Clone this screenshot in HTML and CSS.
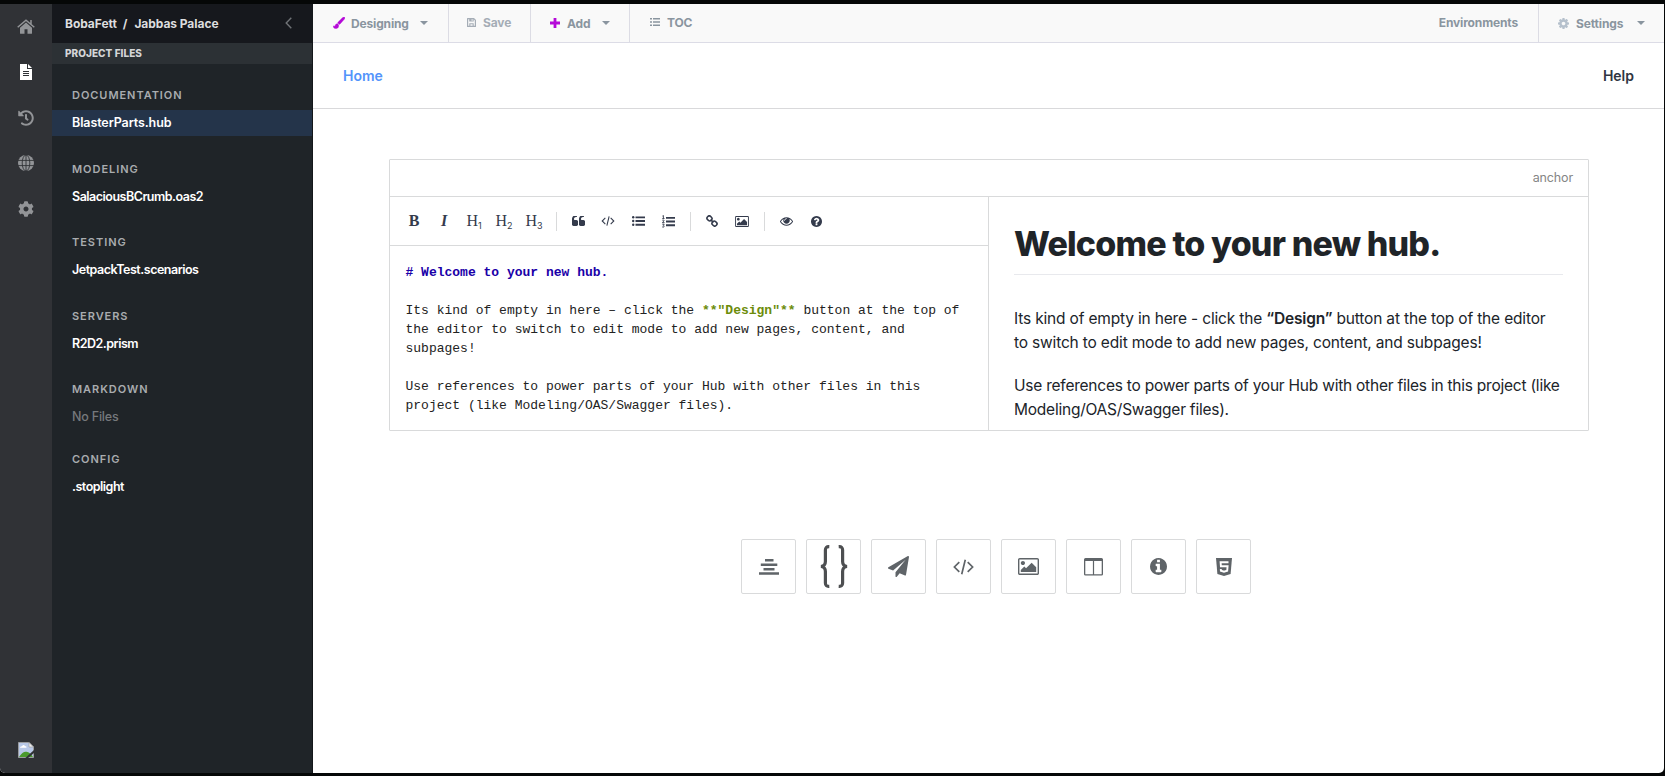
FILE: index.html
```html
<!DOCTYPE html>
<html lang="en">
<head>
<meta charset="utf-8">
<title>Jabbas Palace</title>
<link rel="stylesheet" href="styles.css">
</head>
<body>
<svg class="sprite" aria-hidden="true">
  <symbol id="home" viewBox="0 0 18 15"><path d="M9 3.6 3 8.700V14.200q0 .6.6.6H7.500V10.200H10.500V14.800H14.400q.6 0 .6-.6V8.700z"/><path d="M.7 8.200 9 1.200 17.300 8.200M14 1v4" fill="none" stroke="currentColor" stroke-width="1.500"/></symbol>
  <symbol id="file" viewBox="0 0 12 16"><path d="M0 0H7V5H12V16H0z"/><path d="M8 0 12 4H8z"/><path d="M3 7.500H9M3 9.500H9M3 11.500H9" stroke="#303236" stroke-width="1"/></symbol>
  <symbol id="history" viewBox="0 0 512 512"><path d="M504 255.531c.253 136.640-111.180 248.372-247.820 248.468-59.015.042-113.223-20.530-155.822-54.911-11.077-8.940-11.905-25.541-1.839-35.607l11.267-11.267c8.609-8.609 22.353-9.551 31.891-1.984C173.062 425.135 212.781 440 256 440c101.705 0 184-82.311 184-184 0-101.705-82.311-184-184-184-48.814 0-93.149 18.969-126.068 49.932l50.754 50.754c10.080 10.080 2.941 27.314-11.313 27.314H24c-8.837 0-16-7.163-16-16V38.627c0-14.254 17.234-21.393 27.314-11.314l49.372 49.372C129.209 34.136 189.552 8 256 8c136.810 0 247.747 110.780 248 247.531zm-180.912 78.784l9.823-12.630c8.138-10.463 6.253-25.542-4.210-33.679L288 256.349V152c0-13.255-10.745-24-24-24h-16c-13.255 0-24 10.745-24 24v135.651l65.409 50.874c10.463 8.137 25.541 6.253 33.679-4.210z"/></symbol>
  <symbol id="globe" viewBox="0 0 16 16"><circle cx="8" cy="8" r="8"/><path d="M0 5.400H16M0 10.600H16M8 0V16" stroke="#303236" stroke-width=".9"/><ellipse cx="8" cy="8" rx="3.800" ry="8" fill="none" stroke="#303236" stroke-width=".9"/></symbol>
  <symbol id="cog" viewBox="0 0 512 512"><path d="M487.4 315.7l-42.600-24.600c4.300-23.200 4.300-47 0-70.200l42.600-24.600c4.900-2.800 7.100-8.600 5.500-14-11.100-35.600-30-67.800-54.700-94.600-3.800-4.100-10-5.100-14.800-2.300L380.800 110c-17.900-15.400-38.500-27.300-60.800-35.100V25.800c0-5.600-3.900-10.500-9.400-11.700-36.700-8.200-74.300-7.800-109.200 0-5.500 1.200-9.400 6.100-9.400 11.700V75c-22.200 7.900-42.800 19.800-60.800 35.100L88.700 85.500c-4.900-2.800-11-1.900-14.800 2.300-24.700 26.700-43.600 58.900-54.700 94.600-1.700 5.400.6 11.200 5.500 14L67.300 221c-4.300 23.200-4.300 47 0 70.200l-42.600 24.600c-4.900 2.800-7.100 8.600-5.500 14 11.100 35.600 30 67.800 54.700 94.600 3.800 4.100 10 5.100 14.800 2.300l42.600-24.600c17.900 15.400 38.500 27.300 60.800 35.100v49.200c0 5.600 3.900 10.500 9.400 11.700 36.700 8.200 74.300 7.800 109.200 0 5.500-1.200 9.400-6.100 9.400-11.700v-49.200c22.200-7.900 42.800-19.800 60.800-35.100l42.600 24.600c4.900 2.800 11 1.900 14.800-2.300 24.700-26.700 43.600-58.900 54.700-94.600 1.500-5.500-.7-11.300-5.600-14.100zM256 336c-44.100 0-80-35.900-80-80s35.900-80 80-80 80 35.900 80 80-35.900 80-80 80z"/></symbol>
  <symbol id="gear" viewBox="128 128 1536 1536"><path d="M1152 896q0-106-75-181t-181-75-181 75-75 181 75 181 181 75 181-75 75-181zm512-109v222q0 12-8 23t-20 13l-185 28q-19 54-39 91 35 50 107 138 10 12 10 25t-9 23q-27 37-99 108t-94 71q-12 0-26-9l-138-108q-44 23-91 38-16 136-29 186-7 28-36 28h-222q-14 0-24.500-8.500t-11.500-21.500l-28-184q-49-16-90-37l-141 107q-10 9-25 9-14 0-25-11-126-114-165-168-7-10-7-23 0-12 8-23 15-21 51-66.500t54-70.500q-27-50-41-99l-183-27q-13-2-21-12.500t-8-23.500v-222q0-12 8-23t19-13l186-28q14-46 39-92-40-57-107-138-10-12-10-24 0-10 9-23 26-36 98.500-107.500t94.500-71.500q13 0 26 10l138 107q44-23 91-38 16-136 29-186 7-28 36-28h222q14 0 24.500 8.500t11.500 21.500l28 184q49 16 90 37l142-107q9-9 24-9 13 0 25 10 129 119 165 170 7 8 7 22 0 12-8 23-15 21-51 66.500t-54 70.500q26 50 41 98l183 28q13 2 21 12.500t8 23.500z"/></symbol>
  <symbol id="brush" viewBox="0 0 12 12"><path d="M11.600.3c-.6-.5-1.300-.3-1.900.2L5.200 5c-.5.5-.5.800-.2 1.300l.8.800c.5.300.9.300 1.300-.2L11.500 2c.5-.6.600-1.200.1-1.700zM4.700 6.700C3.400 6.500 2.400 7.300 2.200 8.600 2.100 9.300.9 9.200.1 8.900.4 10.700 1.600 11.800 3.200 11.600 5 11.400 5.900 9.800 5.600 8z" stroke="currentColor" stroke-width=".4"/></symbol>
  <symbol id="save" viewBox="0 0 9 9"><path fill-rule="evenodd" d="M.6 0H7L9 2V8.400Q9 9 8.400 9H.6Q0 9 0 8.400V.6Q0 0 .6 0zM1.200 1.200V7.800H7.800V2.500L6.700 1.300V3.600H2.200V1.200zM4.600 1.200V2.700H5.600V1.200z"/><path d="M2.300 5.200H6.700V8H5.600V6.200H3.400V8H2.300z"/></symbol>
  <symbol id="plus" viewBox="0 0 10 10"><path d="M3.600 0H6.400V3.600H10V6.400H6.400V10H3.600V6.400H0V3.600H3.600z"/></symbol>
  <symbol id="caret" viewBox="0 0 8 4"><path d="M0 0H8L4 4z"/></symbol>
  <symbol id="rows" viewBox="0 0 10 8"><path d="M0 0H2V1.600H0zM3 0H10V1.600H3zM0 3.200H2V4.800H0zM3 3.200H10V4.800H3zM0 6.400H2V8H0zM3 6.400H10V8H3z"/></symbol>
  <symbol id="quote" viewBox="64 256 1664 1280"><path id="q" d="M832 960v384q0 80-56 136t-136 56h-384q-80 0-136-56t-56-136v-704q0-104 40.500-198.500t109.500-163.500 163.500-109.500 198.500-40.500h64q26 0 45 19t19 45v128q0 26-19 45t-45 19h-64q-106 0-181 75t-75 181v32q0 40 28 68t68 28h224q80 0 136 56t56 136z"/><use href="#q" x="896"/></symbol>
  <symbol id="code" viewBox="0 0 20 15"><path d="M6 2.800 1.300 7.500 6 12.200M14 2.800 18.700 7.500 14 12.200M11.700.6 8.300 14.400" fill="none" stroke="currentColor" stroke-width="1.600"/></symbol>
  <symbol id="ul" viewBox="0 0 13 10"><path d="M3.500.4H13V2.300H3.500zM3.500 4.100H13V6H3.500zM3.500 7.800H13V9.700H3.500z"/><circle cx="1.200" cy="1.300" r="1.200"/><circle cx="1.200" cy="5" r="1.200"/><circle cx="1.200" cy="8.700" r="1.200"/></symbol>
  <symbol id="ol" viewBox="0 0 13 13"><path d="M4 1.900H13V3.800H4zM4 5.600H13V7.500H4zM4 9.300H13V11.200H4z"/><path d="M.5 1 1.400.5V3.400M.3 3.500H2.500M.3 5.200Q2.300 4.500 2 5.800L.4 7.600H2.500M.3 9.200H2.200L1.300 10.300Q2.600 10.600 2 11.800 1.200 12.500.2 11.900" fill="none" stroke="currentColor" stroke-width=".9"/></symbol>
  <symbol id="link" viewBox="0 0 12 12"><g fill="none" stroke="currentColor" stroke-width="1.600"><rect x="1" y="1.200" width="5" height="4.400" rx="2" transform="rotate(45 3.500 3.400)"/><rect x="6" y="6.400" width="5" height="4.400" rx="2" transform="rotate(45 8.500 8.600)"/><path d="M4.600 4.600 7.400 7.400"/></g></symbol>
  <symbol id="image" viewBox="-64 128 1920 1536"><path d="M576 576q0 80-56 136t-136 56-136-56-56-136 56-136 136-56 136 56 56 136zm1024 384v448h-1408v-192l320-320 160 160 512-512zm96-704h-1600q-13 0-22.500 9.500t-9.500 22.500v1216q0 13 9.500 22.500t22.500 9.500h1600q13 0 22.500-9.500t9.500-22.500v-1216q0-13-9.500-22.500t-22.500-9.500zm160 32v1216q0 66-47 113t-113 47h-1600q-66 0-113-47t-47-113v-1216q0-66 47-113t113-47h1600q66 0 113 47t47 113z"/></symbol>
  <symbol id="eye" viewBox="0 384 1792 1152"><path d="M1664 960q-152-236-381-353 61 104 61 225 0 185-131.500 316.500t-316.500 131.500-316.500-131.500-131.500-316.500q0-121 61-225-229 117-381 353 133 205 333.500 326.500t434.500 121.500 434.500-121.500 333.500-326.500zm-720-384q0-20-14-34t-34-14q-125 0-214.500 89.500t-89.500 214.500q0 20 14 34t34 14 34-14 14-34q0-86 61-147t147-61q20 0 34-14t14-34zm848 384q0 34-20 69-140 230-376.500 368.500t-499.500 138.500-499.500-139-376.500-368q-20-35-20-69t20-69q140-229 376.500-368t499.500-139 499.500 139 376.500 368q20 35 20 69z"/></symbol>
  <symbol id="help" viewBox="128 128 1536 1536"><path d="M1024 1376v-192q0-14-9-23t-23-9h-192q-14 0-23 9t-9 23v192q0 14 9 23t23 9h192q14 0 23-9t9-23zm256-672q0-88-55.500-163t-138.500-116-170-41q-243 0-371 213-15 24 8 42l132 100q7 6 19 6 16 0 25-12 53-68 86-92 34-24 86-24 48 0 85.500 26t37.500 59q0 38-20 61t-68 45q-63 28-115.500 86.500t-52.500 125.500v36q0 14 9 23t23 9h192q14 0 23-9t9-23q0-19 21.500-49.500t54.500-49.500q32-18 49-28.500t46-35 44.500-48 28-60.500 12.500-81zm384 192q0 209-103 385.500t-279.500 279.500-385.500 103-385.500-103-279.500-279.500-103-385.500 103-385.500 279.500-279.500 385.500-103 385.500 103 279.500 279.500 103 385.500z"/></symbol>
  <symbol id="info" viewBox="128 128 1536 1536"><path d="M1152 1376v-160q0-14-9-23t-23-9h-96v-512q0-14-9-23t-23-9h-320q-14 0-23 9t-9 23v160q0 14 9 23t23 9h96v320h-96q-14 0-23 9t-9 23v160q0 14 9 23t23 9h448q14 0 23-9t9-23zm-128-896v-160q0-14-9-23t-23-9h-192q-14 0-23 9t-9 23v160q0 14 9 23t23 9h192q14 0 23-9t9-23zm640 416q0 209-103 385.500t-279.500 279.500-385.500 103-385.500-103-279.500-279.500-103-385.500 103-385.500 279.500-279.500 385.500-103 385.500 103 279.500 279.500 103 385.500z"/></symbol>
  <symbol id="center" viewBox="0 0 20 16"><path d="M6 0h8.500v2.500H6zM1.800 4.500h16.500V7H1.800zM4.500 9h11v2.500H4.500zM0 13.200h20v2.600H0z"/></symbol>
  <symbol id="braces" viewBox="0 0 28 43"><g fill="none" stroke="currentColor" stroke-width="3.200"><path d="M9.300 1.600Q5.400 1.400 5.400 5V16.500Q5.400 21 1 21.500 5.400 22 5.400 26.500V38Q5.400 41.600 9.300 41.400"/><path d="M18.700 1.600Q22.600 1.400 22.600 5V16.500Q22.600 21 27 21.500 22.600 22 22.600 26.500V38Q22.600 41.600 18.700 41.400"/></g></symbol>
  <symbol id="plane" viewBox="0 0 1792 1792"><path d="M1764 11q33 24 27 64l-256 1536q-5 29-32 45-14 8-31 8-11 0-24-5l-453-185-242 295q-18 23-49 23-13 0-22-4-19-7-30.500-23.500t-11.500-36.500v-349l864-1059-1069 925-395-162q-37-14-40-55-2-40 32-59l1664-960q15-9 32-9 20 0 36 11z"/></symbol>
  <symbol id="columns" viewBox="0 0 19 18"><path fill-rule="evenodd" d="M1.500 0H17.500Q19 0 19 1.500V16.300Q19 17.600 17.500 17.600H1.500Q0 17.600 0 16.300V1.500Q0 0 1.500 0zM1.300 3V16.200H8.900V3zM10.100 3V16.200H17.700V3z"/></symbol>
  <symbol id="html5" viewBox="0 0 16 18"><path d="M0 0H16L14.600 15.900 8 18 1.400 15.900z"/><path d="M12.500 4.200H4.600L4.900 8.200H11.600L11.200 12.700 8 13.700 4.900 12.700 4.800 11" fill="none" stroke="#fff" stroke-width="1.900"/></symbol>
  <symbol id="broken" viewBox="0 0 16 16"><path d="M.5.5H11L15.500 5V15.500H.5z" fill="#b9c9e8" stroke="#9a9c9f"/><path d="M11 .5V5H15.500z" fill="#eee" stroke="#999" stroke-width=".6"/><path d="M2 5.800Q2 4 4 4.200 5.500 2 7 4 9 4.300 8.500 5.800z" fill="#fff"/><path d="M1 15Q5 9 8.500 9.800 12 10 15 15z" fill="#4b9a2d"/><path d="M16 8 6.800 16.500H9.500L16 11z" fill="#303236"/></symbol>
  <symbol id="back" viewBox="0 0 7 12"><path d="M6.300.7 1.200 6 6.300 11.300" fill="none" stroke="currentColor" stroke-width="1.400"/></symbol>
</svg>
<div class="window">
  <nav class="rail">
    <a class="rail-item"><svg class="i-home"><use href="#home"/></svg></a>
    <a class="rail-item active"><svg class="i-file"><use href="#file"/></svg></a>
    <a class="rail-item"><svg class="i-16"><use href="#history"/></svg></a>
    <a class="rail-item"><svg class="i-16"><use href="#globe"/></svg></a>
    <a class="rail-item"><svg class="i-16"><use href="#cog"/></svg></a>
    <svg class="i-16 avatar"><use href="#broken"/></svg>
  </nav>
  <aside class="panel">
    <header class="crumbs"><span class="org">BobaFett</span><span class="slash">/</span><span class="project">Jabbas Palace</span><svg class="i-back"><use href="#back"/></svg></header>
    <div class="panel-title"><span>PROJECT FILES</span></div>
    <div class="groups">
      <section class="group"><h3>DOCUMENTATION</h3><a class="entry selected">BlasterParts.hub</a></section>
      <section class="group"><h3>MODELING</h3><a class="entry">SalaciousBCrumb.oas2</a></section>
      <section class="group"><h3>TESTING</h3><a class="entry">JetpackTest.scenarios</a></section>
      <section class="group"><h3>SERVERS</h3><a class="entry">R2D2.prism</a></section>
      <section class="group empty"><h3>MARKDOWN</h3><span class="entry none">No Files</span></section>
      <section class="group"><h3>CONFIG</h3><a class="entry">.stoplight</a></section>
    </div>
  </aside>
  <main class="main">
    <header class="topbar">
      <a class="tool low designing"><svg class="i-brush accent"><use href="#brush"/></svg><span>Designing</span><svg class="i-caret"><use href="#caret"/></svg></a>
      <a class="tool save"><svg class="i-save"><use href="#save"/></svg><span>Save</span></a>
      <a class="tool low add"><svg class="i-plus accent"><use href="#plus"/></svg><span>Add</span><svg class="i-caret"><use href="#caret"/></svg></a>
      <a class="tool toc"><svg class="i-rows"><use href="#rows"/></svg><span>TOC</span></a>
      <a class="tool envs"><span>Environments</span></a>
      <a class="tool low settings"><svg class="i-gear"><use href="#gear"/></svg><span>Settings</span><svg class="i-caret"><use href="#caret"/></svg></a>
    </header>
    <nav class="hubnav"><a class="home">Home</a><a class="helplink">Help</a></nav>
    <article class="card">
      <div class="anchor"><span>anchor</span></div>
      <div class="split">
        <div class="editor">
          <div class="format">
            <span class="fmt bold">B</span><span class="fmt italic">I</span><span class="fmt">H<sub>1</sub></span><span class="fmt">H<sub>2</sub></span><span class="fmt">H<sub>3</sub></span>
            <i class="sep"></i>
            <span class="fmt"><svg class="i-quote"><use href="#quote"/></svg></span><span class="fmt"><svg class="i-code"><use href="#code"/></svg></span><span class="fmt"><svg class="i-ul"><use href="#ul"/></svg></span><span class="fmt"><svg class="i-ol"><use href="#ol"/></svg></span>
            <i class="sep"></i>
            <span class="fmt"><svg class="i-link"><use href="#link"/></svg></span><span class="fmt"><svg class="i-image"><use href="#image"/></svg></span>
            <i class="sep"></i>
            <span class="fmt"><svg class="i-eye"><use href="#eye"/></svg></span><span class="fmt"><svg class="i-help"><use href="#help"/></svg></span>
          </div>
          <div class="source">
            <div class="line md-head"># Welcome to your new hub.</div>
            <div class="line"></div>
            <div class="line"><span>Its kind of empty in here – click the </span><b class="md-strong">**"Design"**</b><span> button at the top of</span></div>
            <div class="line">the editor to switch to edit mode to add new pages, content, and</div>
            <div class="line">subpages!</div>
            <div class="line"></div>
            <div class="line">Use references to power parts of your Hub with other files in this</div>
            <div class="line">project (like Modeling/OAS/Swagger files).</div>
          </div>
        </div>
        <div class="preview">
          <h1><span>Welcome to your new hub.</span></h1>
          <p class="intro">Its kind of empty in here - click the <b>“Design”</b> button at the top of the editor<br>to switch to edit mode to add new pages, content, and subpages!</p>
          <p>Use references to power parts of your Hub with other files in this project (like<br>Modeling/OAS/Swagger files).</p>
        </div>
      </div>
    </article>
    <div class="blocks">
      <button class="block"><svg class="b-center"><use href="#center"/></svg></button>
      <button class="block"><svg class="b-braces"><use href="#braces"/></svg></button>
      <button class="block"><svg class="b-plane"><use href="#plane"/></svg></button>
      <button class="block"><svg class="b-code"><use href="#code"/></svg></button>
      <button class="block"><svg class="b-image"><use href="#image"/></svg></button>
      <button class="block"><svg class="b-columns"><use href="#columns"/></svg></button>
      <button class="block"><svg class="b-info"><use href="#info"/></svg></button>
      <button class="block"><svg class="b-html"><use href="#html5"/></svg></button>
    </div>
  </main>
</div>
</body>
</html>
```
FILE: styles.css
```css
* { box-sizing: border-box; }
body { margin: 0; height: 776px; overflow: hidden; padding: 4px 1px 3px 0; background: #050707; font-family: Inter, "Liberation Sans", sans-serif; }
svg { display: block; fill: currentColor; flex: none; }
.sprite { position: absolute; width: 0; height: 0; }
.window { display: flex; height: 769px; border-radius: 0 0 5px 5px; overflow: hidden; background: #fff; }

.rail { width: 52px; background: #303236; color: #929497; display: flex; flex-direction: column; align-items: center; }
.rail-item { height: 45.500px; display: flex; align-items: center; justify-content: center; }
.rail-item.active { color: #fff; }
.avatar { margin-top: auto; margin-bottom: 15px; }
.i-home { width: 18px; height: 15px; }
.i-file { width: 12px; height: 16px; }
.i-16 { width: 16px; height: 16px; }

.panel { width: 261px; background: #1f2428; border-right: 1px solid #14171a; color: #fff; }
.crumbs { height: 39px; background: #16181d; padding: 0 20px 1px 13px; display: flex; align-items: center; font-size: 12px; font-weight: 700; letter-spacing: -.05px; color: #dcdddf; }
.slash { margin: 0 7px 0 6px; }
.i-back { width: 7px; height: 12px; margin-left: auto; color: #6f7276; }
.panel-title { height: 21px; background: #2c3135; padding-left: 13px; font-size: 10px; line-height: 21px; font-weight: 800; letter-spacing: .05px; color: #d4d6d8; }
.groups { padding-top: 16px; }
.group { margin-bottom: 17.500px; }
.group.empty { margin-bottom: 14px; }
.group h3 { margin: 0; height: 30px; padding-left: 20px; line-height: 31px; font-size: 11px; font-weight: 600; letter-spacing: .95px; color: #a9acaf; }
.entry { display: block; height: 26px; padding-left: 20px; line-height: 25px; font-size: 12.500px; font-weight: 600; letter-spacing: -.5px; }
.entry.selected { background: #24344a; line-height: 26px; letter-spacing: -.1px; }
.entry.none { color: #76797c; font-weight: 500; line-height: 26px; letter-spacing: -.2px; }

.main { flex: 1; min-width: 0; }
.topbar { display: flex; height: 39px; background: #f9f9f9; border-bottom: 1px solid #dcdce6; font-size: 12px; font-weight: 700; letter-spacing: -.15px; color: #8a959f; }
.tool { display: flex; align-items: center; border-right: 1px solid #dcdce4; padding-bottom: 2px; }
.tool.low { padding-bottom: 0; }
.tool span { margin-left: 7px; }
.tool .i-caret { margin-left: auto; }
.tool.designing { width: 136px; padding: 0 20px 0 20px; }
.tool.designing span { margin-left: 6px; }
.save { width: 82px; padding-left: 18px; color: #a5adb6; }
.tool.add { width: 99px; padding: 0 19px 0 19px; }
.toc { padding-left: 20px; border: 0; }
.envs { margin-left: auto; padding-right: 20px; }
.tool.envs span { margin: 0; }
.tool.settings { width: 125px; padding: 0 19px 0 19px; border: 0; }
.accent { color: #b50ad8; }
.i-brush { width: 12px; height: 12px; }
.i-save { width: 9px; height: 9px; }
.i-plus { width: 10px; height: 10px; }
.i-rows { width: 10px; height: 8px; }
.i-caret { width: 8px; height: 4px; }
.i-gear { width: 11px; height: 11px; color: #b5c0cc; }

.hubnav { height: 66px; border-bottom: 1px solid #d9d9db; padding: 0 30px; display: flex; justify-content: space-between; align-items: center; font-size: 14px; font-weight: 600; color: #2f3542; }
.home { color: #5394fb; }

.card { width: 1200px; height: 272px; margin: 50px 0 0 76px; border: 1px solid #d9dadb; border-radius: 1px; }
.anchor { height: 37px; border-bottom: 1px solid #d9dadb; display: flex; justify-content: flex-end; align-items: center; padding: 0 15px 1px 0; font-size: 12.500px; letter-spacing: -.15px; color: #858585; }
.split { display: flex; height: 233px; }
.editor { width: 599px; flex: none; border-right: 1px solid #d9dadb; }
.format { height: 49px; border-bottom: 1px solid #d9dadb; padding-left: 9px; display: flex; align-items: center; color: #343b4c; }
.fmt { width: 30px; display: flex; justify-content: center; align-items: center; font: 16px/20px "Liberation Serif", serif; }
.fmt sub { font: 9px/10px Inter, sans-serif; align-self: flex-end; }
.bold { font-weight: 700; }
.italic { font-style: italic; font-weight: 700; }
.sep { width: 1px; height: 19px; margin: 0 6px 0 7px; background: #d9dadb; }
.i-quote { width: 13px; height: 10px; }
.i-code { width: 14px; height: 10px; }
.i-ul { width: 13px; height: 10px; }
.i-ol { width: 13px; height: 13px; }
.i-link { width: 12px; height: 12px; }
.i-image { width: 14px; height: 11px; }
.i-eye { width: 13px; height: 9px; }
.i-help { width: 11px; height: 11px; }
.source { padding: 17px 0 0 15.500px; font: 13px/19px "Courier New", "Liberation Mono", monospace; color: #222; }
.line { height: 19px; white-space: pre; }
.md-head { color: #1a00a8; font-weight: 700; }
.md-strong { color: #6c8c0a; }
.preview { flex: 1; min-width: 0; padding: 0 25px; color: #20242a; }
.preview h1 { margin: 0 0 32px; height: 78px; padding-top: 26px; border-bottom: 1px solid #e8e9ed; font-size: 34px; line-height: 42px; font-weight: 800; letter-spacing: -.830px; color: #1f2428; }
.preview p { margin: 0 0 19px; font-size: 15.500px; line-height: 24px; letter-spacing: -.230px; white-space: nowrap; }
.preview p.intro { letter-spacing: -.170px; }
.preview b { font-weight: 600; }

.blocks { display: flex; gap: 10px; margin: 108px 0 0 428px; }
.block { width: 55px; height: 55px; padding: 0; border: 1px solid #d9dadb; border-radius: 2px; background: #fff; color: #5f6468; display: flex; align-items: center; justify-content: center; }
.b-center { width: 20px; height: 16px; }
.b-braces { width: 28px; height: 43px; color: #4d4f51; }
.b-plane { width: 21px; height: 21px; }
.b-code { width: 21px; height: 16px; }
.b-image { width: 21px; height: 17px; }
.b-columns { width: 19px; height: 18px; }
.b-info { width: 17px; height: 17px; }
.b-html { width: 16px; height: 18px; }
```
